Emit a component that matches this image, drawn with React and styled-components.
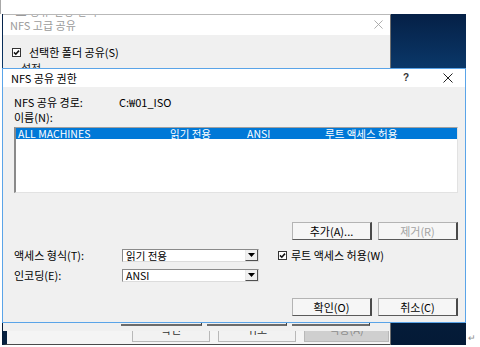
import React from "react";
import styled, { createGlobalStyle } from "styled-components";

const GlobalStyle = createGlobalStyle`
  html, body {
    margin: 0;
    padding: 0;
    background: #ffffff;
  }
  body {
    font-family: "Noto Sans CJK KR", "Liberation Sans", sans-serif;
  }
  * {
    box-sizing: border-box;
  }
`;

const CheckIcon = () => (
  <svg width="9" height="9" viewBox="0 0 9 9">
    <rect x="0.5" y="0.5" width="8" height="8" fill="#fff" stroke="#333" />
    <path d="M2 4.4 L3.8 6.2 L7 2.6" fill="none" stroke="#111" strokeWidth="1.6" />
  </svg>
);

const CloseIcon = ({ color = "#222", size = 10 }) => (
  <svg width={size} height={size} viewBox="0 0 10 10">
    <path d="M0.5 0.5 L9.5 9.5 M9.5 0.5 L0.5 9.5" stroke={color} strokeWidth="1" />
  </svg>
);

const ArrowIcon = () => (
  <svg width="7" height="4" viewBox="0 0 7 4">
    <path d="M0 0 L7 0 L3.5 4 Z" fill="#000" />
  </svg>
);

const App = () => {
  return (
    <Page>
      <GlobalStyle />
      <TopMargin />
      <Stage>
        <Desktop>
          <BackWindow>
            <CutRow>
              <CutText>▬ 공유 설정 관리</CutText>
            </CutRow>
            <BackTitleBar>
              <span>NFS 고급 공유</span>
              <CloseIcon color="#a5a5a5" size={9} />
            </BackTitleBar>
            <BackBody>
              <CheckRow>
                <CheckIcon />
                <span>선택한 폴더 공유(S)</span>
              </CheckRow>
              <GroupLabel>
                <GroupLine />
                <span>설정</span>
              </GroupLabel>
            </BackBody>
            <BottomBand>
              <StubRow>
                <Stub $w={81} />
                <Stub $w={80} />
                <Stub $w={78} />
              </StubRow>
              <ClipRow>
                <ClipButton $w={78}>
                  <ClipText>확인</ClipText>
                </ClipButton>
                <ClipButton $w={78}>
                  <ClipText>취소</ClipText>
                </ClipButton>
                <ClipButton $w={85} $disabled>
                  <ClipText>적용(A)</ClipText>
                </ClipButton>
              </ClipRow>
            </BottomBand>
          </BackWindow>

          <FrontWindow>
            <TitleBar>
              <span>NFS 공유 권한</span>
              <TitleButtons>
                <HelpMark>?</HelpMark>
                <CloseIcon />
              </TitleButtons>
            </TitleBar>
            <Body>
              <PathRow>
                <PathLabel>NFS 공유 경로:</PathLabel>
                <span>C:₩01_ISO</span>
              </PathRow>
              <NameLabel>이름(N):</NameLabel>
              <ListBox>
                <ListRow $selected>
                  <span>ALL MACHINES</span>
                  <span>읽기 전용</span>
                  <span>ANSI</span>
                  <span>루트 액세스 허용</span>
                </ListRow>
              </ListBox>
              <ButtonRow $top={29}>
                <Button>추가(A)...</Button>
                <Button $disabled>제거(R)</Button>
              </ButtonRow>
              <FormRow $top={9}>
                <FormLabel>액세스 형식(T):</FormLabel>
                <Combo>
                  <ComboText>읽기 전용</ComboText>
                  <ComboArrow>
                    <ArrowIcon />
                  </ComboArrow>
                </Combo>
                <RootCheck>
                  <CheckIcon />
                  <span>루트 액세스 허용(W)</span>
                </RootCheck>
              </FormRow>
              <FormRow $top={7}>
                <FormLabel>인코딩(E):</FormLabel>
                <Combo>
                  <ComboText>ANSI</ComboText>
                  <ComboArrow>
                    <ArrowIcon />
                  </ComboArrow>
                </Combo>
              </FormRow>
              <ButtonRow $top={16}>
                <Button>확인(O)</Button>
                <Button>취소(C)</Button>
              </ButtonRow>
            </Body>
          </FrontWindow>
        </Desktop>
        <ReturnMark>↵</ReturnMark>
      </Stage>
    </Page>
  );
};

const Page = styled.div`
  width: 480px;
  height: 347px;
  display: flex;
  flex-direction: column;
  overflow: hidden;
  background: #ffffff;
  font-size: 11px;
  color: #000;
`;

const TopMargin = styled.div`
  height: 14px;
  flex-shrink: 0;
  border-left: 1px solid #a8a8a8;
`;

const Stage = styled.div`
  display: flex;
  align-items: flex-end;
`;

const Desktop = styled.div`
  position: relative;
  margin-left: 2px;
  width: 464px;
  height: 331px;
  flex-shrink: 0;
  background: linear-gradient(
    180deg,
    #052046 0%,
    #0a3768 16%,
    #072a52 40%,
    #041a36 100%
  );
`;

const ReturnMark = styled.span`
  font-size: 9px;
  line-height: 10px;
  color: #8c8c8c;
  margin: 0 0 2px 2px;
`;

const BackWindow = styled.div`
  position: absolute;
  left: 1px;
  top: 0;
  width: 388px;
  height: 331px;
  display: flex;
  flex-direction: column;
  background: #f0f0f0;
  border-top: 1px solid #b9b9b9;
  border-right: 1px solid #6f6f6f;
`;

const CutRow = styled.div`
  height: 2px;
  flex-shrink: 0;
  overflow: hidden;
  background: #ffffff;
  padding-left: 13px;
`;

const CutText = styled.div`
  margin-top: -9px;
  line-height: 12px;
  font-size: 10px;
  color: #9a9a9a;
  letter-spacing: 1px;
`;

const BackTitleBar = styled.div`
  height: 18px;
  background: #ffffff;
  display: flex;
  align-items: center;
  justify-content: space-between;
  padding: 0 7px 3px 7px;
  color: #9b9b9b;
  font-size: 11px;
  line-height: 14px;
`;

const BackBody = styled.div`
  padding: 10px 0 0 9px;
  display: flex;
  flex-direction: column;
`;

const CheckRow = styled.div`
  display: flex;
  align-items: center;
  gap: 8px;
  height: 14px;
  line-height: 14px;
`;

const GroupLabel = styled.div`
  display: flex;
  align-items: center;
  gap: 3px;
  margin-top: 2px;
  height: 14px;
  line-height: 14px;
  color: #222;
`;

const GroupLine = styled.div`
  width: 6px;
  height: 1px;
  background: #b5b5b5;
`;

const BottomBand = styled.div`
  margin-top: auto;
  height: 23px;
  display: flex;
  flex-direction: column;
`;

const StubRow = styled.div`
  height: 9px;
  display: flex;
  gap: 5px;
  padding-left: 118px;
`;

const Stub = styled.div`
  width: ${({ $w }) => $w}px;
  height: 4px;
  border-bottom: 2px solid #6b6b6b;
  border-right: 1px solid #3e3e3e;
`;

const ClipRow = styled.div`
  height: 14px;
  display: flex;
  gap: 8px;
  padding-left: 125px;
  border-left: 4px solid #06203f;
  border-bottom: 1px solid #4a4a4a;
  background: #f4f4f4;
`;

const ClipButton = styled.div`
  width: ${({ $w }) => $w}px;
  height: 11px;
  overflow: hidden;
  display: flex;
  justify-content: center;
  border: 1px solid #b8b8b8;
  border-top: none;
  background: ${({ $disabled }) => ($disabled ? "#cfcfcf" : "#f2f2f2")};
  color: ${({ $disabled }) => ($disabled ? "#8d8d8d" : "#333")};
`;

const ClipText = styled.span`
  margin-top: -9px;
  line-height: 14px;
  font-size: 11px;
`;

const FrontWindow = styled.div`
  position: absolute;
  left: 0;
  top: 54px;
  width: 464px;
  height: 255px;
  display: flex;
  flex-direction: column;
  background: #f0f0f0;
  border: 1px solid #5aa4e8;
`;

const TitleBar = styled.div`
  height: 18px;
  background: #ffffff;
  display: flex;
  align-items: center;
  justify-content: space-between;
  padding: 0 12px 0 8px;
  line-height: 14px;
`;

const TitleButtons = styled.div`
  display: flex;
  align-items: center;
  gap: 34px;
`;

const HelpMark = styled.span`
  font-family: "Liberation Sans", sans-serif;
  font-weight: bold;
  font-size: 10px;
  color: #333;
`;

const Body = styled.div`
  display: flex;
  flex-direction: column;
  padding: 0 7px 0 11px;
`;

const PathRow = styled.div`
  margin-top: 9px;
  height: 12px;
  line-height: 12px;
  display: flex;
`;

const PathLabel = styled.span`
  width: 105px;
`;

const NameLabel = styled.div`
  margin-top: 3px;
  height: 12px;
  line-height: 12px;
`;

const ListBox = styled.div`
  margin-top: 4px;
  height: 66px;
  background: #ffffff;
  border-top: 1px solid #a0a0a0;
  border-left: 2px solid #8a8a8a;
  border-right: 1px solid #e2e2e2;
  border-bottom: 1px solid #e2e2e2;
`;

const ListRow = styled.div`
  height: 11px;
  display: grid;
  grid-template-columns: 152px 77px 78px 1fr;
  align-items: center;
  padding-left: 2px;
  line-height: 11px;
  font-size: 10.5px;
  background: ${({ $selected }) => ($selected ? "#0078d7" : "transparent")};
  color: ${({ $selected }) => ($selected ? "#ffffff" : "#000")};
`;

const ButtonRow = styled.div`
  margin-top: ${({ $top }) => $top}px;
  display: flex;
  justify-content: flex-end;
  gap: 6px;
`;

const Button = styled.div`
  width: 80px;
  height: 18px;
  display: flex;
  align-items: center;
  justify-content: center;
  background: #f6f6f6;
  border: 1px solid #b4b4b4;
  border-right: 2px solid #4a4a4a;
  border-bottom: 1px solid #5a5a5a;
  line-height: 14px;
  color: ${({ $disabled }) => ($disabled ? "#a3a3a3" : "#000")};
`;

const FormRow = styled.div`
  margin-top: ${({ $top }) => $top}px;
  height: 13px;
  display: flex;
  align-items: center;
`;

const FormLabel = styled.span`
  width: 108px;
  line-height: 13px;
`;

const Combo = styled.div`
  width: 137px;
  height: 13px;
  display: flex;
  align-items: center;
  background: #ffffff;
  border-top: 1px solid #8a8a8a;
  border-left: 1px solid #8a8a8a;
  border-right: 1px solid #dcdcdc;
  border-bottom: 1px solid #dcdcdc;
`;

const ComboText = styled.span`
  flex: 1;
  padding-left: 3px;
  line-height: 11px;
  font-size: 10.5px;
`;

const ComboArrow = styled.div`
  width: 13px;
  height: 11px;
  display: flex;
  align-items: center;
  justify-content: center;
  background: #f0f0f0;
  border-left: 1px solid #e8e8e8;
  border-right: 1px solid #505050;
  border-bottom: 1px solid #505050;
`;

const RootCheck = styled.div`
  margin-left: 19px;
  display: flex;
  align-items: center;
  gap: 4px;
  line-height: 13px;
`;

export default App;
